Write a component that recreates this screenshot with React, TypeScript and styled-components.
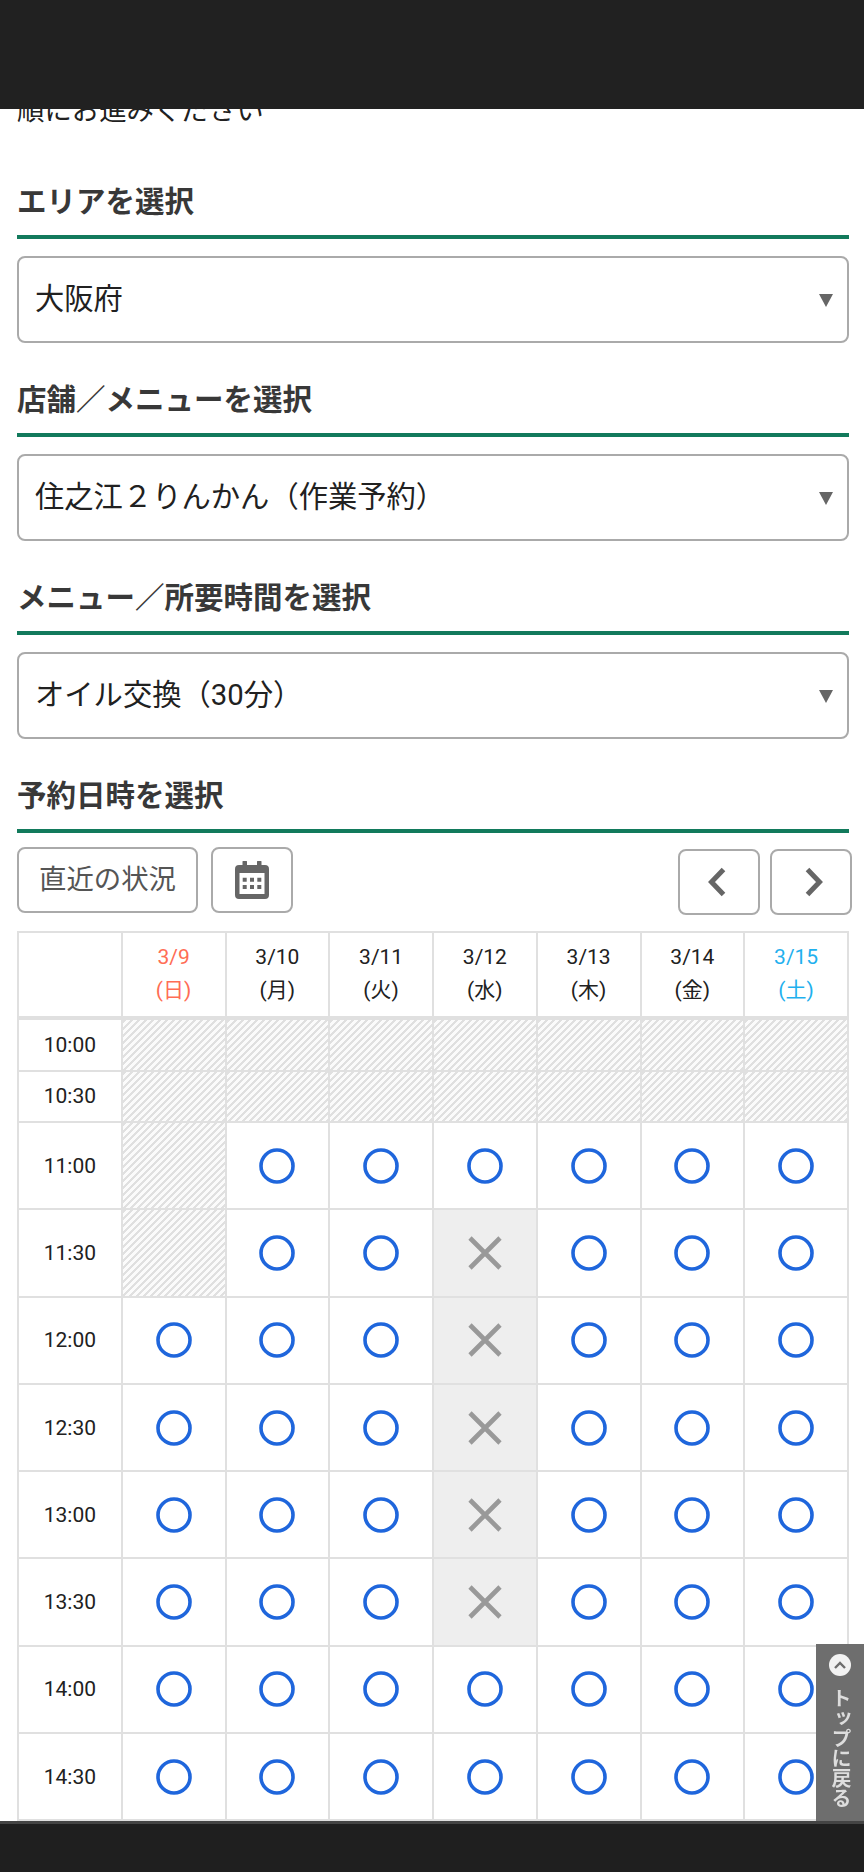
import { ReactElement } from 'react'
import styled, { createGlobalStyle } from 'styled-components'

const days = [
  { date: '3/9', week: '日', tone: 'sun' },
  { date: '3/10', week: '月' },
  { date: '3/11', week: '火' },
  { date: '3/12', week: '水' },
  { date: '3/13', week: '木' },
  { date: '3/14', week: '金' },
  { date: '3/15', week: '土', tone: 'sat' },
]

// h = closed (hatched), o = open, x = full
const slots: { time: string; marks: string; short?: boolean }[] = [
  { time: '10:00', marks: 'hhhhhhh', short: true },
  { time: '10:30', marks: 'hhhhhhh', short: true },
  { time: '11:00', marks: 'hoooooo' },
  { time: '11:30', marks: 'hooxooo' },
  { time: '12:00', marks: 'oooxooo' },
  { time: '12:30', marks: 'oooxooo' },
  { time: '13:00', marks: 'oooxooo' },
  { time: '13:30', marks: 'oooxooo' },
  { time: '14:00', marks: 'ooooooo' },
  { time: '14:30', marks: 'ooooooo' },
]

const selects = [
  { title: 'エリアを選択', value: '大阪府' },
  { title: '店舗／メニューを選択', value: '住之江２りんかん（作業予約）' },
  { title: 'メニュー／所要時間を選択', value: 'オイル交換（30分）' },
]

function CalendarIcon(): ReactElement {
  return (
    <svg width="34" height="38" viewBox="0 0 34 38">
      <path
        fill="#666"
        fillRule="evenodd"
        d="M8 0h3.5a.5.5 0 0 1 .5.5V4h10V.5a.5.5 0 0 1 .5-.5H26a.5.5 0 0 1 .5.5V4H30a4 4 0 0 1 4 4v26a4 4 0 0 1-4 4H4a4 4 0 0 1-4-4V8a4 4 0 0 1 4-4h3.5V.5A.5.5 0 0 1 8 0zM4.5 12v21h25V12z"
      />
      <path
        fill="#666"
        d="M7.7 16.7h4v4h-4zM15 16.7h4v4h-4zM22.3 16.7h4v4h-4zM7.7 24h4v4h-4zM15 24h4v4h-4zM22.3 24h4v4h-4z"
      />
    </svg>
  )
}

function Chevron({ left }: { left?: boolean }): ReactElement {
  return (
    <svg width="18" height="30" viewBox="0 0 18 30">
      <path
        fill="none"
        stroke="#666"
        strokeWidth="5"
        d={left ? 'M15.5 2.5 3.5 15l12 12.5' : 'M2.5 2.5 14.5 15 2.5 27.5'}
      />
    </svg>
  )
}

function Circle(): ReactElement {
  return (
    <svg width="36" height="36" viewBox="0 0 36 36">
      <circle cx="18" cy="18" r="16" fill="none" stroke="#1f66dc" strokeWidth="3.6" />
    </svg>
  )
}

function Cross(): ReactElement {
  return (
    <svg width="34" height="34" viewBox="0 0 34 34">
      <path fill="none" stroke="#999" strokeWidth="4.6" d="M2 2l30 30M32 2 2 32" />
    </svg>
  )
}

export default function App(): ReactElement {
  return (
    <>
      <GlobalStyle />
      <Page>
        <TopBar />
        <Content>
          <Intro>
            <span>順にお進みください</span>
          </Intro>
          {selects.map((s) => (
            <Section key={s.title}>
              <Heading>{s.title}</Heading>
              <SelectBox>
                <SelectValue>{s.value}</SelectValue>
                <Arrow />
              </SelectBox>
            </Section>
          ))}
          <Section>
            <Heading>予約日時を選択</Heading>
            <Toolbar>
              <ToolGroup>
                <ToolButton>直近の状況</ToolButton>
                <IconButton aria-label="カレンダー">
                  <CalendarIcon />
                </IconButton>
              </ToolGroup>
              <NavGroup>
                <IconButton aria-label="前へ" $nudge="left">
                  <Chevron left />
                </IconButton>
                <IconButton aria-label="次へ" $nudge="right">
                  <Chevron />
                </IconButton>
              </NavGroup>
            </Toolbar>
            <Schedule>
              <HeadCell />
              {days.map((d) => (
                <HeadCell key={d.date} $tone={d.tone}>
                  <span>{d.date}</span>
                  <span>({d.week})</span>
                </HeadCell>
              ))}
              {slots.map((slot) => (
                <Row key={slot.time} $short={slot.short}>
                  <TimeCell>{slot.time}</TimeCell>
                  {slot.marks.split('').map((mark, i) => (
                    <MarkCell key={i} $mark={mark}>
                      {mark === 'o' && <Circle />}
                      {mark === 'x' && <Cross />}
                    </MarkCell>
                  ))}
                </Row>
              ))}
            </Schedule>
          </Section>
        </Content>
        <BottomBar />
        <BackToTop>
          <TopCircle>
            <svg width="12" height="8" viewBox="0 0 12 8">
              <path fill="none" stroke="#6e6e6e" strokeWidth="2.4" d="M1 7l5-5 5 5" />
            </svg>
          </TopCircle>
          <TopLabel>トップに戻る</TopLabel>
        </BackToTop>
      </Page>
    </>
  )
}

const GlobalStyle = createGlobalStyle`
  html, body {
    margin: 0;
    padding: 0;
    background: #fff;
  }
  * {
    box-sizing: border-box;
  }
  body {
    font-family: Roboto, "Noto Sans CJK JP", sans-serif;
    color: #212121;
  }
`

const Page = styled.div`
  position: relative;
  display: flex;
  flex-direction: column;
  width: 864px;
  height: 1872px;
  overflow: hidden;
`

const TopBar = styled.div`
  flex: 0 0 109px;
  background: #212121;
`

const BottomBar = styled.div`
  flex: 0 0 51px;
  background: #1f1f1f;
  border-top: 3px solid #444;
`

const Content = styled.main`
  flex: 1 1 auto;
  min-height: 0;
  overflow: hidden;
  padding: 0 15px 0 17px;
`

const Intro = styled.div`
  display: flex;
  align-items: flex-end;
  height: 20px;
  margin-bottom: 16px;
  overflow: hidden;
  font-size: 27.4px;
  line-height: 36px;
  color: #212121;

  span {
    display: block;
    flex: none;
  }
`

const Section = styled.section`
  padding-top: 39px;
`

const Heading = styled.h2`
  margin: 0 0 17px;
  padding-bottom: 15px;
  height: 55px;
  border-bottom: 4px solid #127a5c;
  font-size: 29.5px;
  line-height: 36px;
  font-weight: 700;
  color: #383838;
  white-space: nowrap;
`

const SelectBox = styled.div`
  position: relative;
  display: flex;
  align-items: center;
  height: 87px;
  padding: 0 16px 7px;
  border: 2px solid #aaa;
  border-radius: 8px;
`

const SelectValue = styled.span`
  font-size: 29.3px;
  color: #212121;
`

const Arrow = styled.span`
  position: absolute;
  right: 14px;
  top: 50%;
  width: 0;
  height: 0;
  margin-top: -6px;
  border-left: 7.5px solid transparent;
  border-right: 7.5px solid transparent;
  border-top: 13px solid #666;
`

const Toolbar = styled.div`
  display: flex;
  justify-content: space-between;
  height: 84px;
  margin-top: -3px;
  margin-right: -3px;
`

const ToolGroup = styled.div`
  display: flex;
  gap: 13px;
  height: 66px;
`

const NavGroup = styled.div`
  display: flex;
  gap: 10px;
  height: 66px;
  margin-top: 2px;
`

const ToolButton = styled.button`
  width: 181px;
  padding: 0 0 6px;
  background: #fff;
  border: 2px solid #aaa;
  border-radius: 8px;
  font-family: inherit;
  font-size: 27.4px;
  color: #555;
`

const IconButton = styled.button<{ $nudge?: string }>`
  display: flex;
  align-items: center;
  justify-content: center;
  width: 82px;
  padding: ${(p) => (p.$nudge === 'left' ? '0 4px 0 0' : p.$nudge === 'right' ? '0 0 0 5px' : '0')};
  background: #fff;
  border: 2px solid #aaa;
  border-radius: 8px;
`

const Schedule = styled.div`
  display: grid;
  grid-template-columns: repeat(8, 1fr);
  width: 832px;
  border-top: 2px solid #e0e0e0;
  border-left: 2px solid #e0e0e0;
  font-size: 21px;
`

const HeadCell = styled.div<{ $tone?: string }>`
  display: flex;
  flex-direction: column;
  align-items: center;
  justify-content: center;
  gap: 5px;
  height: 87px;
  padding-bottom: 3px;
  border-right: 2px solid #e0e0e0;
  border-bottom: 4px solid #e0e0e0;
  line-height: 28px;
  color: ${(p) => (p.$tone === 'sun' ? '#ff6d55' : p.$tone === 'sat' ? '#1fb0ee' : '#212121')};
`

const Row = styled.div<{ $short?: boolean }>`
  display: grid;
  grid-column: 1 / -1;
  grid-template-columns: subgrid;
  height: ${(p) => (p.$short ? '51.5px' : '87.3px')};
`

const TimeCell = styled.div`
  display: flex;
  align-items: center;
  justify-content: center;
  border-right: 2px solid #e0e0e0;
  border-bottom: 2px solid #e0e0e0;
  color: #212121;
`

const MarkCell = styled.div<{ $mark: string }>`
  display: flex;
  align-items: center;
  justify-content: center;
  border-right: 2px solid #e0e0e0;
  border-bottom: 2px solid #e0e0e0;
  background: ${(p) =>
    p.$mark === 'h'
      ? 'repeating-linear-gradient(135deg, #e0e0e0 0 2.2px, #fbfbfb 2.2px 4.95px)'
      : p.$mark === 'x'
      ? '#eee'
      : '#fff'};
`

const BackToTop = styled.a`
  position: absolute;
  right: 0;
  bottom: 51px;
  display: flex;
  flex-direction: column;
  align-items: center;
  width: 48px;
  height: 177px;
  padding-top: 10px;
  background: #6e6e6e;
`

const TopCircle = styled.span`
  display: flex;
  align-items: center;
  justify-content: center;
  width: 22px;
  height: 22px;
  border-radius: 50%;
  background: #f2f2f2;
  filter: blur(0.5px);
`

const TopLabel = styled.span`
  margin-top: 12px;
  writing-mode: vertical-rl;
  font-size: 20px;
  font-weight: 700;
  line-height: 24px;
  color: #ddd;
  filter: blur(0.5px);
`
